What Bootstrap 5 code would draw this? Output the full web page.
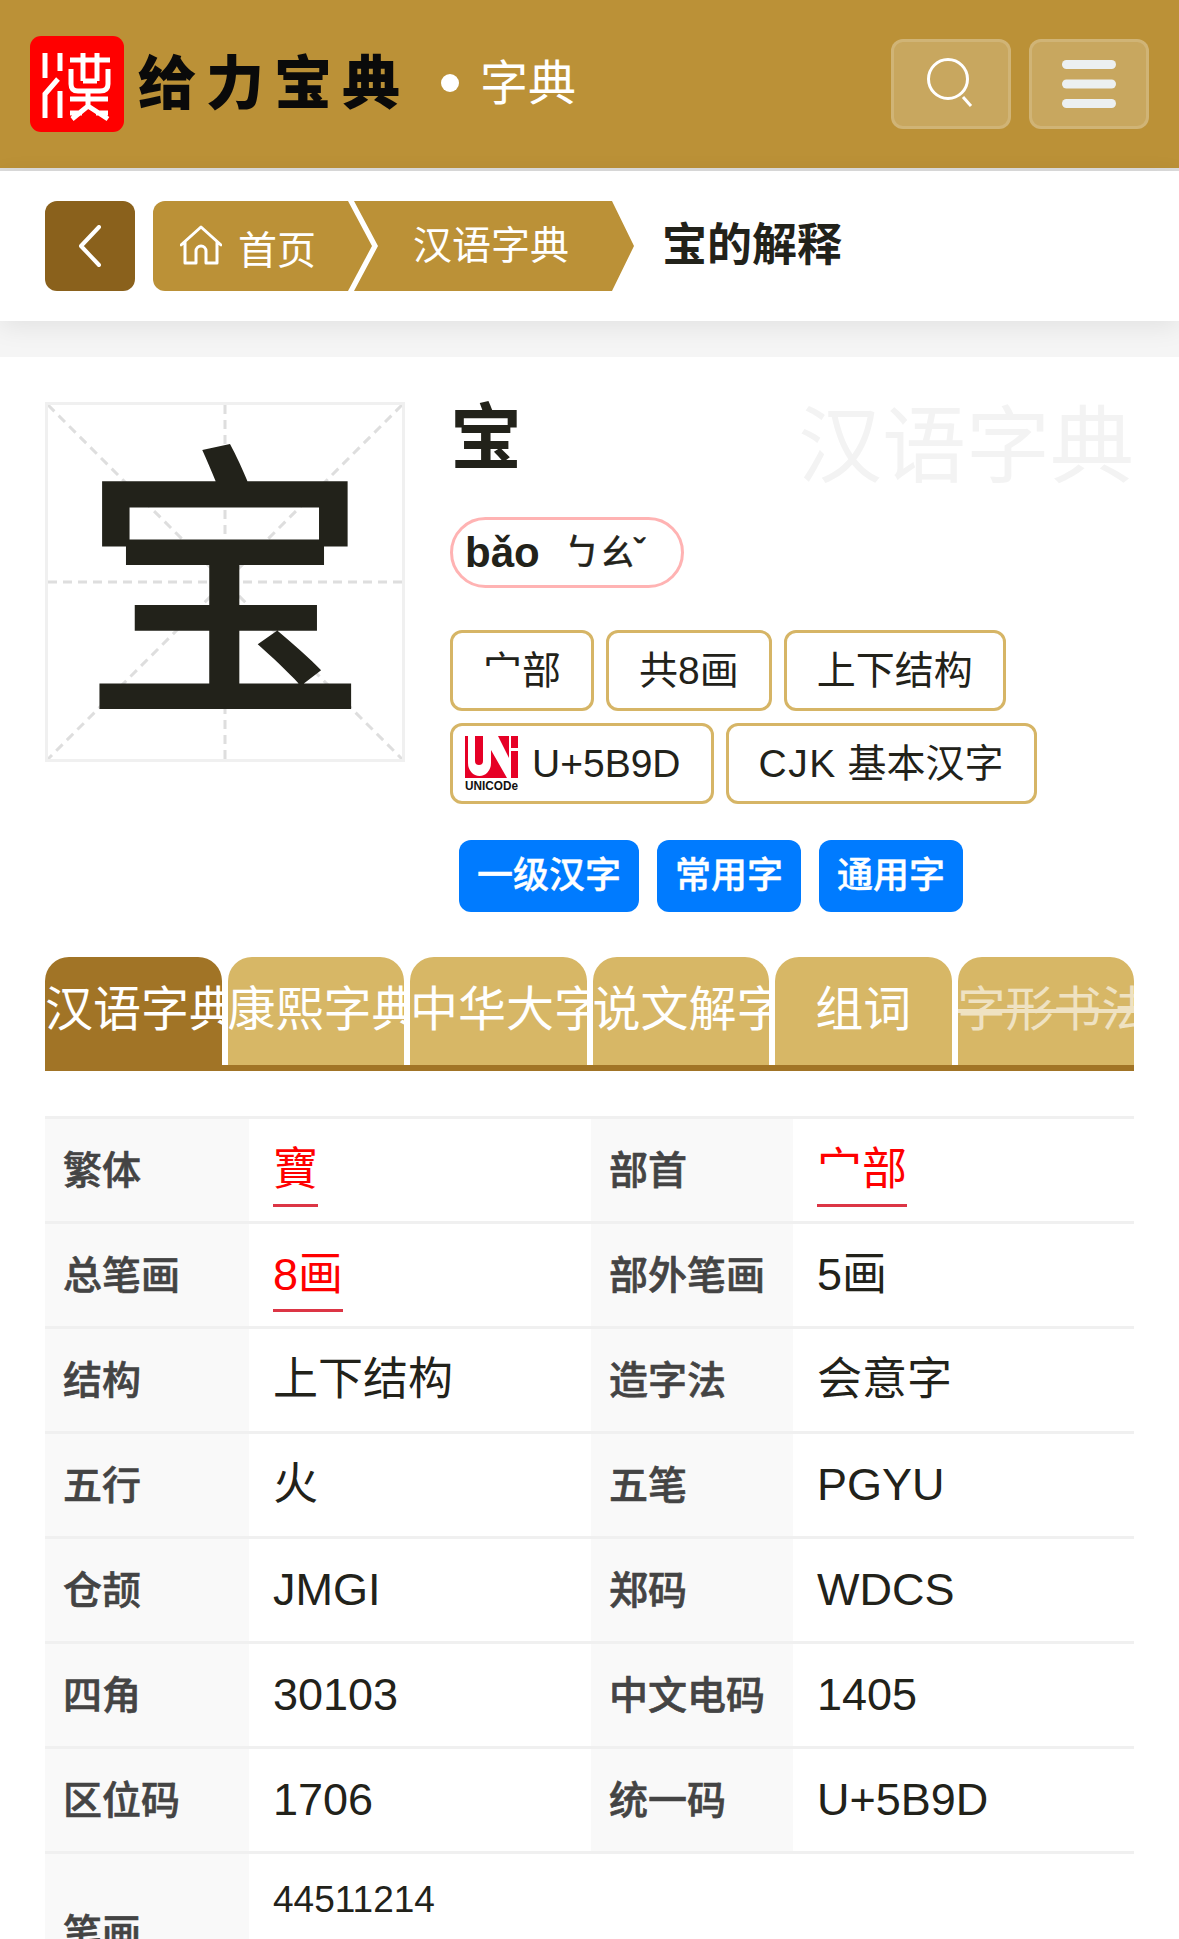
<!DOCTYPE html>
<html lang="zh">
<head>
<meta charset="UTF-8">
<title>宝的解释</title>
<link href="https://cdn.jsdelivr.net/npm/bootstrap@5.3.0/dist/css/bootstrap.min.css" rel="stylesheet">
<style>
    html, body { height: 1939px; overflow: hidden; }
    body { font-family: "Liberation Sans", "Noto Sans CJK SC", sans-serif; color: #22221a; background: #fff; }
    .top-bar { height: 171px; background: #bb9137; border-bottom: 3px solid #dcdcdc; padding: 36px 30px 0 30px; }
    .seal { width: 94px; height: 96px; flex: none; }
    .site-name { font-size: 58px; font-weight: 900; color: #0a0a0a; letter-spacing: 10px; margin-left: 14px; line-height: 96px; white-space: nowrap; }
    .site-dot { width: 18px; height: 18px; border-radius: 50%; background: #fff; margin: 38px 0 0 31px; flex: none; }
    .site-sub { font-size: 48px; color: #fff; margin-left: 21px; line-height: 96px; }
    .top-btn { width: 120px; height: 90px; margin-top: 3px; background: rgba(255,255,255,.2); border: 3px solid rgba(255,255,255,.15); border-radius: 12px; padding: 0; }
    .top-btn + .top-btn { margin-left: 18px; }
    .crumb-bar { height: 150px; padding: 30px 45px; background: #fff; box-shadow: 0 6px 24px rgba(0,0,0,.08); position: relative; }
    .back-btn { width: 90px; height: 90px; background: #8a611c; border-radius: 12px; flex: none; }
    .crumb-trail { margin-left: 18px; height: 90px; flex: none; }
    .crumb-seg { height: 90px; background: #bb9137; color: #fff; font-size: 39px; white-space: nowrap; }
    .seg-home { width: 219px; padding-left: 27px; gap: 16px; border-radius: 12px 0 0 12px; clip-path: polygon(0 0, 195px 0, 219px 45px, 195px 90px, 0 90px); }
    .seg-home span { padding-top: 10px; }
    .seg-dict { width: 280px; margin-left: -18px; padding-left: 59px; clip-path: polygon(0 0, 258px 0, 280px 45px, 258px 90px, 0 90px, 24px 45px); }
    .crumb-title { font-size: 45px; font-weight: 700; margin-left: 28px; line-height: 90px; }
    .gap-strip { height: 36px; background: #f5f5f5; }
    .main-wrap { padding: 45px 45px 0 45px; background: #fff; }
    .char-box { width: 360px; height: 360px; border: 3px solid #f0f0f0; flex: none; position: relative; }
    .char-box svg { position: absolute; inset: 0; }
    .char-big { position: absolute; inset: 0; text-align: center; font-size: 292px; line-height: 374px; font-weight: 500; color: #22221a; }
    .info-col { margin-left: 45px; flex: 1; position: relative; min-width: 0; }
    .watermark { position: absolute; right: 0; top: -5px; font-size: 84px; line-height: 100px; color: #f3f3f3; }
    .char-title { font-size: 72px; font-weight: 700; line-height: 72px; height: 115px; }
    .py-pill { display: inline-flex; align-items: center; border: 3px solid #ffb3b3; border-radius: 36px; height: 71px; width: 234px; padding-left: 12px; font-size: 42px; font-weight: 700; white-space: nowrap; }
    .py-zhuyin { font-size: 36px; font-weight: 400; margin-left: 24px; letter-spacing: -1px; -webkit-text-stroke: .6px #22221a; }
    .tag-row { gap: 12px; margin-top: 12px; }
    .tag-box { height: 81px; border: 3px solid #d6b566; border-radius: 12px; font-size: 39px; line-height: 75px; padding: 0 30px; white-space: nowrap; background: #fff; }
    .tag-box.uni { padding-left: 12px; padding-right: 30px; display: flex; align-items: center; gap: 13px; }
    .cjk-latin { letter-spacing: 1.5px; }
    .lvl-row { gap: 18px; margin-top: 36px; margin-left: 9px; }
    .lvl-tag { height: 72px; line-height: 72px; background: #007bff; color: #fff; border-radius: 12px; font-size: 36px; padding: 0 18px; font-weight: 500; -webkit-text-stroke: .4px #fff; }
    .tab-row { margin-top: 45px; height: 114px; border-bottom: 6px solid #a17426; gap: 6px; }
    .tab-cell { flex: 1 1 0; min-width: 0; height: 108px; background: #d7b766; border-radius: 24px 24px 0 0; color: #fff; font-size: 48px; line-height: 106px; text-align: center; overflow: hidden; white-space: nowrap; }
    .tab-cell.on { background: #a17426; height: 114px; }
    .tab-cell.off span { opacity: .6; text-decoration: line-through; }
    .info-table { width: 1089px; margin-top: 45px; table-layout: fixed; border-collapse: collapse; border-top: 3px solid #f0f0f0; }
    .info-table tr { height: 105px; border-bottom: 3px solid #f0f0f0; }
    .info-table th { background: #f9f9f9; color: #444; font-size: 39px; font-weight: 500; padding: 3px 0 0 18px; white-space: nowrap; -webkit-text-stroke: .6px #444; }
    .info-table td { font-size: 45px; padding: 0 0 0 24px; vertical-align: middle; }
    .info-table td a { color: #f00; text-decoration: none; border-bottom: 3px solid #dc3545; display: inline-block; line-height: 68px; margin-top: 2px; }
    .info-table td.strokes { font-size: 37px; vertical-align: top; padding-top: 18px; }
</style>
</head>
<body>

<div class="top-bar d-flex align-items-start">
    <svg class="seal" viewBox="0 0 94 96">
        <rect width="94" height="96" rx="11" fill="#f00"/>
        <g fill="none" stroke="#fff" stroke-width="5">
            <path d="M15 17V42M30 17V35M28 43L15 58V82M30 55V82"/>
            <path d="M40 24H80M53 17V45M67 17V45M53 45H67M41 33V48Q41 55 48 55H70Q78 55 78 48V33M58 55V73M40 63H78M40 77H52M66 77H78M42 83L58 70L78 83"/>
        </g>
    </svg>
    <div class="site-name">给力宝典</div>
    <div class="site-dot"></div>
    <div class="site-sub">字典</div>
    <button class="top-btn ms-auto d-flex align-items-center justify-content-center" type="button">
        <svg width="48" height="54" viewBox="0 0 48 54" fill="none" stroke="#fff"><circle cx="21" cy="22" r="19.5" stroke-width="3"/><path d="M36 40L44 49" stroke-width="3"/></svg>
    </button>
    <button class="top-btn d-flex align-items-center justify-content-center" type="button">
        <svg width="54" height="48" viewBox="0 0 54 48" fill="#ecf0f1"><rect width="54" height="9" y="0" rx="4.5"/><rect width="54" height="9" y="19.5" rx="4.5"/><rect width="54" height="9" y="39" rx="4.5"/></svg>
    </button>
</div>

<div class="crumb-bar d-flex align-items-start">
    <div class="back-btn d-flex align-items-center justify-content-center">
        <svg width="24" height="42" viewBox="0 0 24 42" fill="none" stroke="#fff" stroke-width="4" stroke-linecap="round" stroke-linejoin="round"><path d="M21 2L3 21L21 40"/></svg>
    </div>
    <div class="crumb-trail d-flex">
        <div class="crumb-seg seg-home d-flex align-items-center">
            <svg width="42" height="42" viewBox="0 0 42 42" fill="none" stroke="#fff" stroke-width="3" stroke-linejoin="round" stroke-linecap="round"><path d="M1 20L21 2L41 20M5 17V38H16V26A5 5 0 0 1 26 26V38H37V17"/></svg>
            <span>首页</span>
        </div>
        <div class="crumb-seg seg-dict d-flex align-items-center">汉语字典</div>
    </div>
    <div class="crumb-title">宝的解释</div>
</div>
<div class="gap-strip"></div>

<div class="main-wrap">
    <div class="d-flex align-items-start">
        <div class="char-box">
            <svg width="354" height="354" viewBox="0 0 354 354" fill="none" stroke="#dedede" stroke-width="3" stroke-dasharray="9 6">
                <path d="M0 0L354 354M354 0L0 354M177 0V354M0 177H354"/>
            </svg>
            <div class="char-big">宝</div>
        </div>
        <div class="info-col">
            <div class="watermark">汉语字典</div>
            <div class="char-title">宝</div>
            <div class="py-pill">bǎo<span class="py-zhuyin">ㄅㄠˇ</span></div>
            <div class="d-flex tag-row" style="margin-top: 42px">
                <div class="tag-box">宀部</div>
                <div class="tag-box">共8画</div>
                <div class="tag-box">上下结构</div>
            </div>
            <div class="d-flex tag-row">
                <div class="tag-box uni">
                    <svg width="54" height="56" viewBox="0 0 54 56">
                        <path d="M0 0H53V42H0Z" fill="#e60026"/>
                        <path d="M3 0H10V25A4 4 0 0 0 18 25V0H26V27A11.5 13 0 0 1 3 27Z" fill="#fff"/>
                        <path d="M26 0H33L44 22V0H46V12H53V15H46V42H42L26 14Z" fill="#fff"/>
                        <text x="0" y="54" font-size="13" font-weight="700" textLength="53" lengthAdjust="spacingAndGlyphs" fill="#111" font-family="Liberation Sans">UNICODe</text>
                    </svg>
                    <span>U+5B9D</span>
                </div>
                <div class="tag-box"><span class="cjk-latin">CJK</span>&nbsp;基本汉字</div>
            </div>
            <div class="d-flex lvl-row">
                <div class="lvl-tag">一级汉字</div>
                <div class="lvl-tag">常用字</div>
                <div class="lvl-tag">通用字</div>
            </div>
        </div>
    </div>

    <div class="d-flex tab-row">
        <div class="tab-cell on"><span>汉语字典</span></div>
        <div class="tab-cell"><span>康熙字典</span></div>
        <div class="tab-cell"><span>中华大字</span></div>
        <div class="tab-cell"><span>说文解字</span></div>
        <div class="tab-cell"><span>组词</span></div>
        <div class="tab-cell off"><span>字形书法</span></div>
    </div>

    <table class="info-table">
        <colgroup><col style="width: 204px"><col style="width: 342px"><col style="width: 202px"><col style="width: 341px"></colgroup>
        <tr><th>繁体</th><td><a href="#">寶</a></td><th>部首</th><td><a href="#">宀部</a></td></tr>
        <tr><th>总笔画</th><td><a href="#">8画</a></td><th>部外笔画</th><td>5画</td></tr>
        <tr><th>结构</th><td>上下结构</td><th>造字法</th><td>会意字</td></tr>
        <tr><th>五行</th><td>火</td><th>五笔</th><td>PGYU</td></tr>
        <tr><th>仓颉</th><td>JMGI</td><th>郑码</th><td>WDCS</td></tr>
        <tr><th>四角</th><td>30103</td><th>中文电码</th><td>1405</td></tr>
        <tr><th>区位码</th><td>1706</td><th>统一码</th><td>U+5B9D</td></tr>
        <tr style="height: 160px"><th>笔画</th><td colspan="3" class="strokes">44511214</td></tr>
    </table>
</div>

<script src="https://cdn.jsdelivr.net/npm/bootstrap@5.3.0/dist/js/bootstrap.bundle.min.js"></script>
</body>
</html>
